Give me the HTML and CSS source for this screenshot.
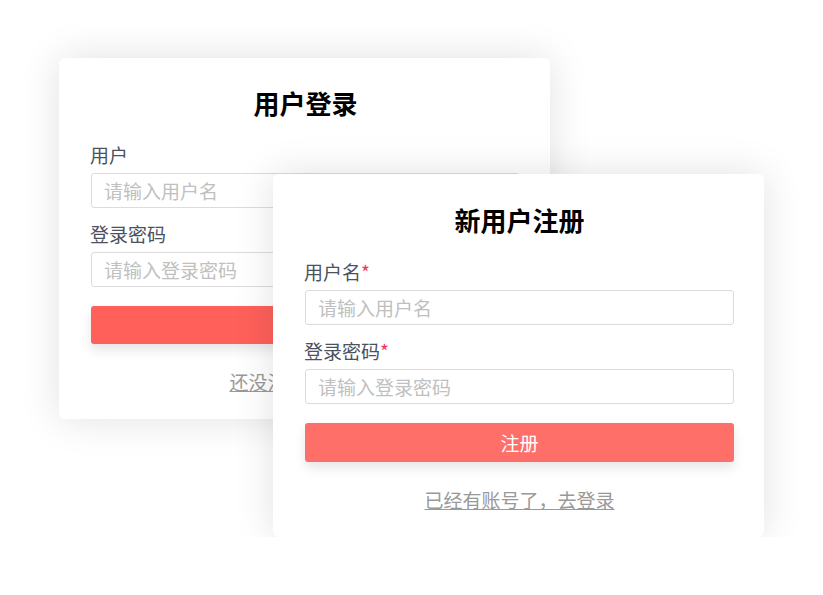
FILE: index.html
```html
<!DOCTYPE html>
<html lang="zh-CN">
<head>
    <meta charset="UTF-8">
    <meta name="viewport" content="width=device-width, initial-scale=1.0">
    <title>用户登录 / 注册</title>
    <link rel="stylesheet" href="styles.css">
</head>
<body>
    <div class="stage">
        <!-- 登录卡片（在后面） -->
        <div class="card login">
            <h2 class="title">用户登录</h2>
            <label class="label">用户</label>
            <input class="input" type="text" placeholder="请输入用户名">
            <label class="label">登录密码</label>
            <input class="input" type="password" placeholder="请输入登录密码">
            <button class="btn">登录</button>
            <a href="#" class="link">还没注册，去注册</a>
        </div>

        <!-- 注册卡片（盖在上面） -->
        <div class="card register">
            <h2 class="title">新用户注册</h2>
            <label class="label">用户名<span class="req">*</span></label>
            <input class="input" type="text" placeholder="请输入用户名">
            <label class="label">登录密码<span class="req">*</span></label>
            <input class="input" type="password" placeholder="请输入登录密码">
            <button class="btn">注册</button>
            <a href="#" class="link">已经有账号了，去登录</a>
        </div>
    </div>
</body>
</html>
```

FILE: styles.css
```css
body {
    font-family: "Noto Sans CJK SC", "Noto Sans", sans-serif;
    background-color: #fff;
    margin: 0;
    padding: 0;
}
.stage {
    display: grid;
    padding: 58px 0 0 59px;
}
.card {
    grid-area: 1 / 1;
    width: 491px;
    box-sizing: border-box;
    padding: 29px 30px 25px 32px;
    background-color: #fff;
    border-radius: 6px;
    box-shadow: 0 0 40px rgba(0, 0, 0, 0.12);
    display: flex;
    flex-direction: column;
    align-self: start;
}
.register {
    margin: 116px 0 0 214px;
    padding-top: 30px;
    padding-bottom: 25px;
}
.title {
    font-size: 26px;
    font-weight: 700;
    line-height: 32px;
    color: #000;
    text-align: center;
    margin: 0 0 24px;
}
.label {
    font-size: 19px;
    line-height: 24px;
    color: #4b515d;
    margin-bottom: 6px;
    margin-left: -1px;
}
.req {
    color: #f5365c;
}
.input {
    height: 35px;
    box-sizing: border-box;
    border: 1px solid #dcdcdc;
    border-radius: 3px;
    padding: 0 12px;
    font-family: inherit;
    font-size: 19px;
    color: #333;
    margin-bottom: 14px;
    outline: none;
}
.input::placeholder {
    color: #c0c0c0;
}
.btn {
    height: 38px;
    margin-top: 5px;
    border: none;
    border-radius: 3px;
    background-color: #ff605a;
    color: #fff;
    font-family: inherit;
    font-size: 19px;
    box-shadow: 0 6px 12px rgba(0, 0, 0, 0.1);
}
.register .btn {
    height: 39px;
    background-color: #ff6f69;
}
.link {
    align-self: center;
    margin-top: 26px;
    font-size: 19px;
    line-height: 24px;
    color: #999;
    text-decoration: underline;
}
```
